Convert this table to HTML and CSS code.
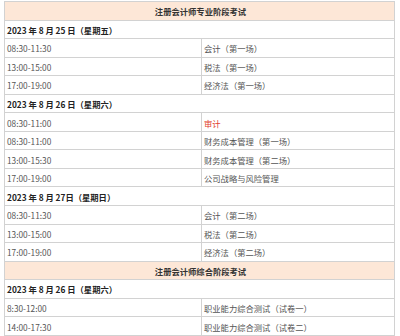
FILE: index.html
```html
<!DOCTYPE html>
<html lang="zh">
<head>
<meta charset="utf-8">
<link rel="stylesheet" href="styles.css">
</head>
<body>
<div class="wrap">
<div class="sched">
<div class="row head"><div class="cell">注册会计师专业阶段考试</div></div>
<div class="row date"><div class="cell">2023 年 8 月 25 日（星期五）</div></div>
<div class="row"><div class="cell t">08:30-11:30</div><div class="cell s">会计（第一场）</div></div>
<div class="row"><div class="cell t">13:00-15:00</div><div class="cell s">税法（第一场）</div></div>
<div class="row"><div class="cell t">17:00-19:00</div><div class="cell s">经济法（第一场）</div></div>
<div class="row date"><div class="cell">2023 年 8 月 26 日（星期六）</div></div>
<div class="row"><div class="cell t">08:30-11:00</div><div class="cell s red">审计</div></div>
<div class="row"><div class="cell t">08:30-11:00</div><div class="cell s">财务成本管理（第一场）</div></div>
<div class="row"><div class="cell t">13:00-15:30</div><div class="cell s">财务成本管理（第二场）</div></div>
<div class="row"><div class="cell t">17:00-19:00</div><div class="cell s">公司战略与风险管理</div></div>
<div class="row date"><div class="cell">2023 年 8 月 27日（星期日）</div></div>
<div class="row"><div class="cell t">08:30-11:30</div><div class="cell s">会计（第二场）</div></div>
<div class="row"><div class="cell t">13:00-15:00</div><div class="cell s">税法（第二场）</div></div>
<div class="row"><div class="cell t">17:00-19:00</div><div class="cell s">经济法（第二场）</div></div>
<div class="row head"><div class="cell">注册会计师综合阶段考试</div></div>
<div class="row date"><div class="cell">2023 年 8 月 26 日（星期六）</div></div>
<div class="row"><div class="cell t">8:30-12:00</div><div class="cell s">职业能力综合测试（试卷一）</div></div>
<div class="row"><div class="cell t">14:00-17:30</div><div class="cell s">职业能力综合测试（试卷二）</div></div>
</div>
</div>
</body>
</html>
```

FILE: styles.css
```css
html, body {
  margin: 0;
  padding: 0;
  background: #ffffff;
}
.wrap {
  padding: 1px 0 0 4px;
}
.sched {
  width: 391px;
  box-sizing: border-box;
  border: 1px solid #d2d2d2;
  border-bottom: none;
  font-family: "Noto Sans CJK SC", "Noto Sans", sans-serif;
  font-size: 8.3px;
  color: #555555;
}
.row {
  display: flex;
  height: 18.55px;
  box-sizing: border-box;
  border-bottom: 1px solid #d2d2d2;
}
.cell {
  flex: 1 1 auto;
  display: flex;
  align-items: center;
  padding-left: 2px;
  padding-top: 1px;
  white-space: nowrap;
  line-height: 10px;
}
.cell.t {
  flex: 0 0 194px;
}
.cell.s {
  flex: 1 1 auto;
  border-left: 1px solid #d2d2d2;
  padding-left: 2px;
}
.head {
  background: #fde7d7;
}
.head .cell {
  justify-content: center;
  font-weight: bold;
  color: #333333;
}
.date .cell {
  font-weight: bold;
  color: #222222;
}
.red {
  color: #e2412e;
}
```
